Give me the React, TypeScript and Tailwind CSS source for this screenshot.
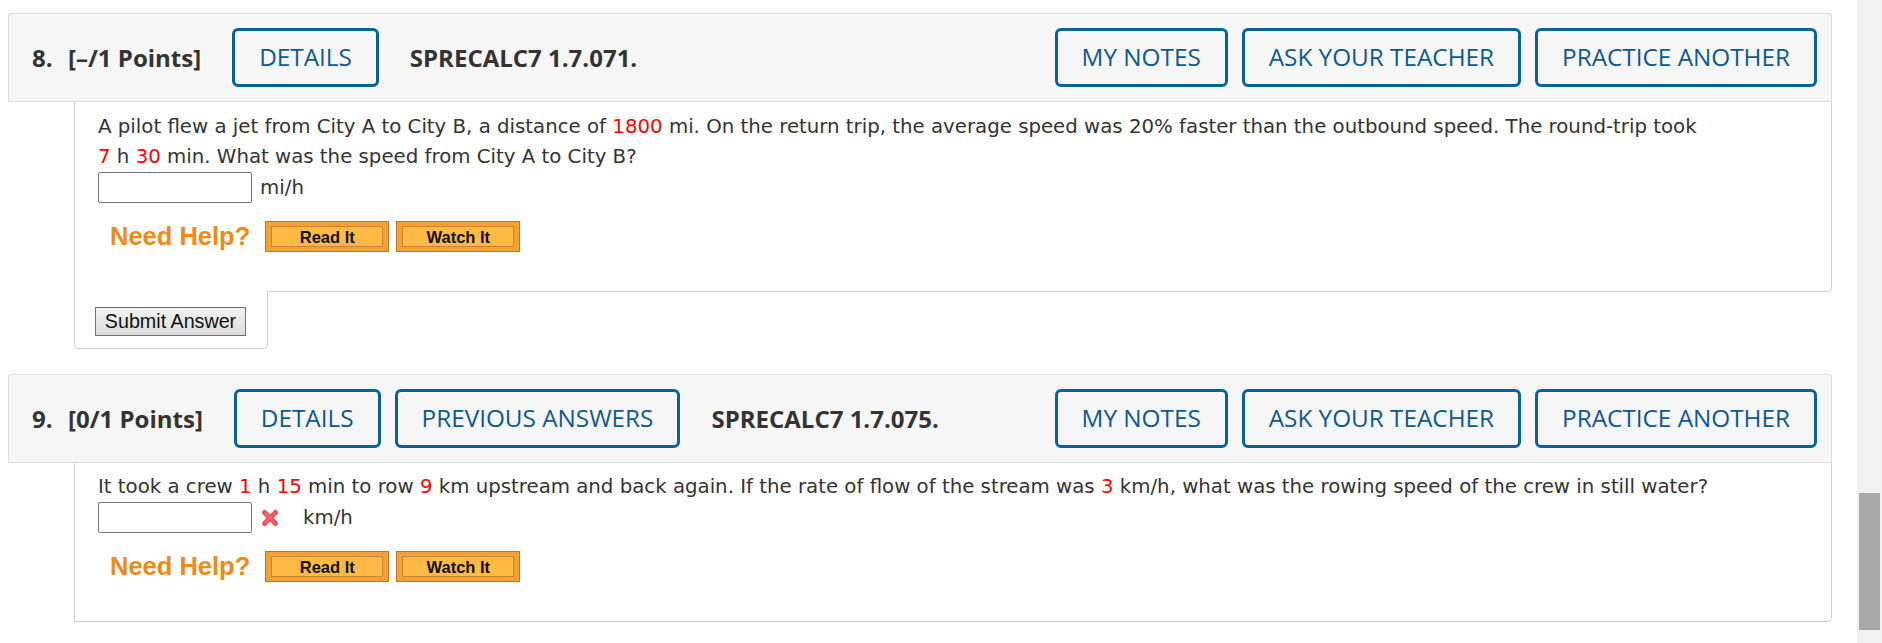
import type { ReactNode } from 'react';

const HEAD_FONT = "font-['Open_Sans',sans-serif]";
const BODY_FONT = "font-['DejaVu_Sans',Verdana,sans-serif]";
const ARIAL = "font-['Liberation_Sans',Arial,sans-serif]";

function Red({ children }: { children: ReactNode }) {
  return <span className="text-[#ff0000]">{children}</span>;
}

function HeadButton({ label }: { label: string }) {
  return (
    <button
      type="button"
      className="flex h-[59px] items-center rounded-[6px] border-[3px] border-[#07619a] bg-[#f6f6f6] px-[24px] text-[24.3px] leading-none text-[#0a5a92]"
    >
      {label}
    </button>
  );
}

function QuestionHeader({
  num,
  points,
  code,
  previous,
}: {
  num: string;
  points: string;
  code: string;
  previous?: boolean;
}) {
  return (
    <div
      className={`flex h-[89px] items-center rounded-t-[3px] border border-[#dddddd] bg-[#f6f6f6] pl-[23px] pr-[14px] ${HEAD_FONT}`}
    >
      <span className="w-[36px] text-[24px] font-bold text-[#333333]">{num}</span>
      <span className="text-[24px] font-bold text-[#333333]">{points}</span>
      <div className="ml-[31px] flex gap-[14px]">
        <HeadButton label="DETAILS" />
        {previous ? <HeadButton label="PREVIOUS ANSWERS" /> : null}
      </div>
      <span className="ml-[31px] text-[24px] font-bold text-[#333333]">{code}</span>
      <div className="ml-auto flex gap-[14px]">
        <HeadButton label="MY NOTES" />
        <HeadButton label="ASK YOUR TEACHER" />
        <HeadButton label="PRACTICE ANOTHER" />
      </div>
    </div>
  );
}

function HelpButton({ label }: { label: string }) {
  return (
    <div className="h-[31px] w-[124px] border border-[#c8721d] bg-[#f6a033] p-[4px_5px]">
      <div
        className={`flex h-full items-center justify-center border border-[#c98434] bg-[#feba42] text-[16.5px] font-bold text-[#111111] ${ARIAL}`}
      >
        {label}
      </div>
    </div>
  );
}

function NeedHelp() {
  return (
    <div className="ml-[12px] mt-[18px] flex items-center">
      <span className={`text-[25.5px] font-bold leading-none text-[#f08a12] ${ARIAL}`}>Need Help?</span>
      <div className="ml-[15px] flex gap-[7px]">
        <HelpButton label="Read It" />
        <HelpButton label="Watch It" />
      </div>
    </div>
  );
}

function AnswerBox() {
  return <div className="h-[31px] w-[154px] rounded-[2px] border border-[#767676] bg-white" />;
}

function WrongMark() {
  return (
    <svg width="20" height="20" viewBox="0 0 20 20" className="ml-[8px]">
      <path d="M4.5 4.5 L15.5 15.5 M15.5 4.5 L4.5 15.5" stroke="#ef4d58" strokeWidth="5" strokeLinecap="round" />
      <path d="M5 5 L15 15 M15 5 L5 15" stroke="#f7838a" strokeWidth="1.2" strokeLinecap="round" opacity="0.6" />
    </svg>
  );
}

function Scrollbar() {
  return (
    <div className="w-[25px] shrink-0 bg-[#f1f1f1] px-[2px]">
      <div className="mt-[493px] h-[137px] bg-[#a8a8a8]" />
    </div>
  );
}

export default function App() {
  return (
    <div className="flex h-[643px] w-[1882px] overflow-hidden bg-white">
      <div className="flex-1 pl-[8px] pr-[25px] pt-[13px]">
        <QuestionHeader num="8." points="[–/1 Points]" code="SPRECALC7 1.7.071." />
        <div
          className={`ml-[66px] rounded-br-[5px] border-x border-b border-[#cfcfcf] bg-white pb-[39px] pl-[23px] pt-[10px] text-[19.75px] leading-[30px] text-[#333333] ${BODY_FONT}`}
        >
          <p className="whitespace-nowrap">
            A pilot flew a jet from City A to City B, a distance of <Red>1800</Red> mi. On the return trip, the
            average speed was 20% faster than the outbound speed. The round-trip took
          </p>
          <p className="whitespace-nowrap">
            <Red>7</Red> h <Red>30</Red> min. What was the speed from City A to City B?
          </p>
          <div className="flex items-center">
            <AnswerBox />
            <span className="ml-[8px]">mi/h</span>
          </div>
          <NeedHelp />
        </div>
        <div className="relative -mt-px ml-[66px] w-[194px] rounded-b-[5px] border-x border-b border-[#cfcfcf] bg-white pb-[12px] pl-[20px] pt-[16px]">
          <button
            type="button"
            className={`h-[29px] w-[151px] border border-[#707070] bg-gradient-to-b from-[#f2f2f2] to-[#dddddd] text-[19.7px] leading-none text-[#111111] ${ARIAL}`}
          >
            Submit Answer
          </button>
        </div>

        <div className="mt-[25px]">
          <QuestionHeader num="9." points="[0/1 Points]" code="SPRECALC7 1.7.075." previous />
          <div
            className={`ml-[66px] rounded-br-[5px] border-x border-b border-[#cfcfcf] bg-white pb-[39px] pl-[23px] pt-[9px] text-[19.75px] leading-[30px] text-[#333333] ${BODY_FONT}`}
          >
            <p className="whitespace-nowrap">
              It took a crew <Red>1</Red> h <Red>15</Red> min to row <Red>9</Red> km upstream and back again. If the
              rate of flow of the stream was <Red>3</Red> km/h, what was the rowing speed of the crew in still water?
            </p>
            <div className="flex items-center">
              <AnswerBox />
              <WrongMark />
              <span className="ml-[23px]">km/h</span>
            </div>
            <NeedHelp />
          </div>
        </div>
      </div>
      <Scrollbar />
    </div>
  );
}
